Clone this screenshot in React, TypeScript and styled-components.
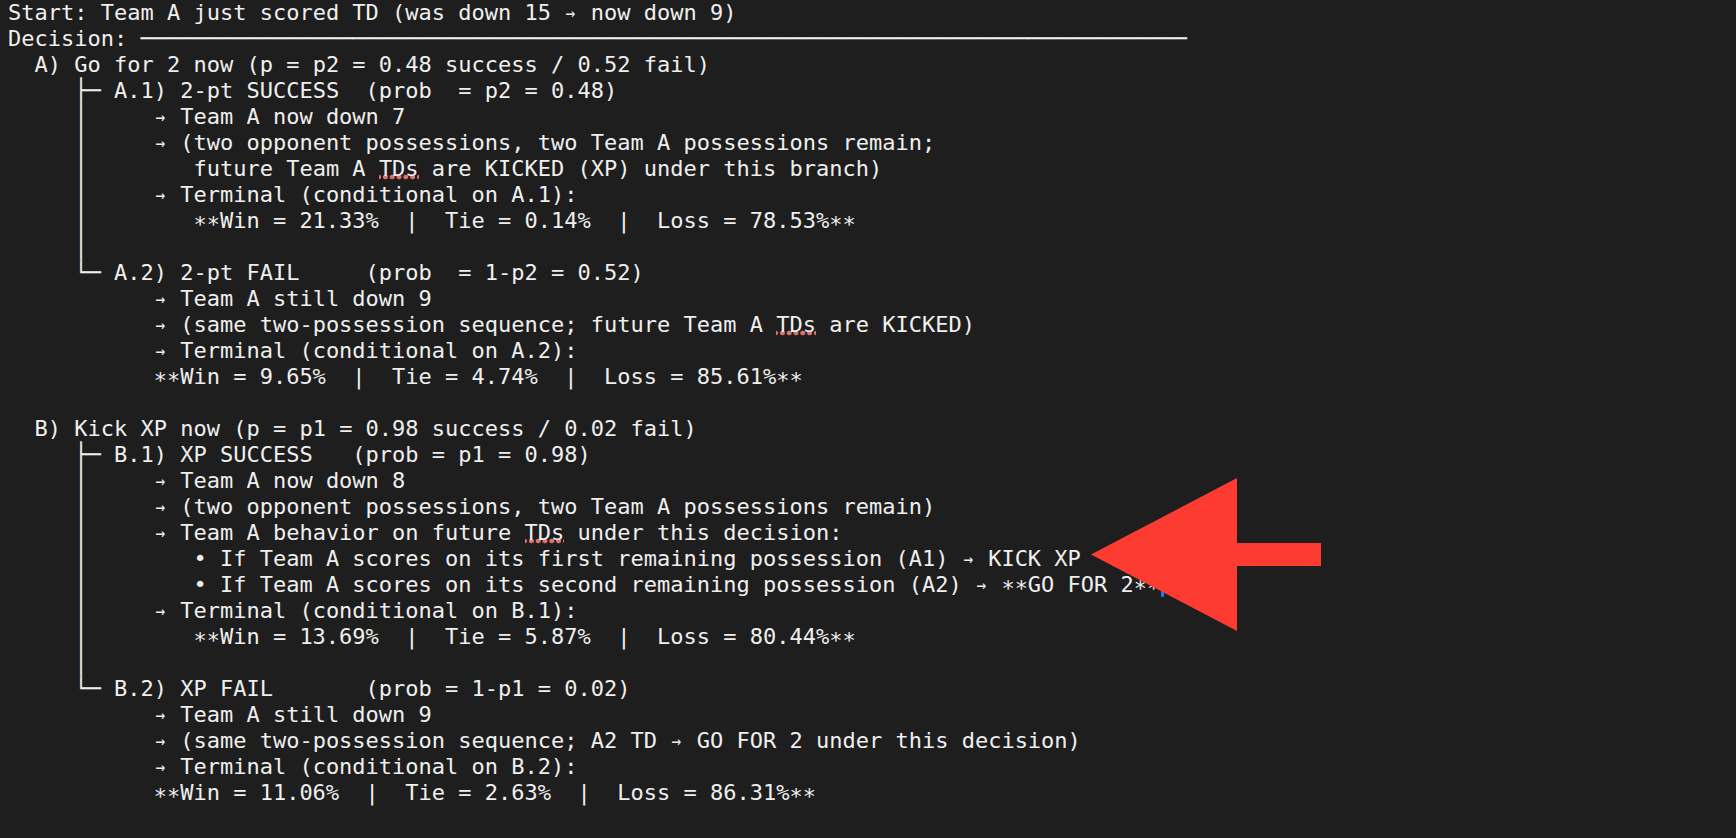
import React from "react";
import styled, { createGlobalStyle } from "styled-components";

const GlobalStyle = createGlobalStyle`
  html, body {
    margin: 0;
    padding: 0;
    background: #1e1e1e;
  }
  #root {
    min-height: 100vh;
    background: #1e1e1e;
  }
`;

const Screen = styled.main`
  position: relative;
  min-height: 838px;
  padding: 0 8px;
  background: #1e1e1e;
  color: #efefef;
  font-family: "DejaVu Sans Mono", "Liberation Mono", monospace;
  font-size: 22px;
  line-height: 26px;
  overflow: hidden;
`;

const Transcript = styled.div`
  display: flex;
  flex-direction: column;
`;

const Line = styled.div`
  height: 26px;
  white-space: pre;
`;

const Arrow = styled.span`
  display: inline-block;
  width: 1ch;
  text-align: center;
  transform: scale(0.72, 0.82);
`;

const Star = styled.span`
  display: inline-block;
  width: 1ch;
  text-align: center;
  vertical-align: -4px;
`;

const Flag = styled.span`
  background-image: radial-gradient(circle at center, #e0736e 0, #e0736e 2.1px, transparent 2.7px);
  background-size: 6.8px 8px;
  background-position: 3px 100%;
  background-repeat: repeat-x;
`;

const Caret = styled.span`
  display: inline-block;
  width: 3px;
  height: 22px;
  margin-left: 1px;
  vertical-align: -5px;
  background: #1d7cf2;
  border-radius: 1px;
`;

const ArrowMark = styled.svg`
  position: absolute;
  left: 1091px;
  top: 478px;
  width: 231px;
  height: 154px;
  pointer-events: none;
`;

type Seg = string | { flag: string } | { caret: true };

const rule = "─".repeat(79);

const lines: Seg[][] = [
  ["Start: Team A just scored TD (was down 15 → now down 9)"],
  ["Decision: " + rule],
  ["  A) Go for 2 now (p = p2 = 0.48 success / 0.52 fail)"],
  ["     ├─ A.1) 2-pt SUCCESS  (prob  = p2 = 0.48)"],
  ["     │     → Team A now down 7"],
  ["     │     → (two opponent possessions, two Team A possessions remain;"],
  ["     │        future Team A ", { flag: "TDs" }, " are KICKED (XP) under this branch)"],
  ["     │     → Terminal (conditional on A.1):"],
  ["     │        **Win = 21.33%  |  Tie = 0.14%  |  Loss = 78.53%**"],
  ["     │"],
  ["     └─ A.2) 2-pt FAIL     (prob  = 1-p2 = 0.52)"],
  ["           → Team A still down 9"],
  ["           → (same two-possession sequence; future Team A ", { flag: "TDs" }, " are KICKED)"],
  ["           → Terminal (conditional on A.2):"],
  ["           **Win = 9.65%  |  Tie = 4.74%  |  Loss = 85.61%**"],
  [""],
  ["  B) Kick XP now (p = p1 = 0.98 success / 0.02 fail)"],
  ["     ├─ B.1) XP SUCCESS   (prob = p1 = 0.98)"],
  ["     │     → Team A now down 8"],
  ["     │     → (two opponent possessions, two Team A possessions remain)"],
  ["     │     → Team A behavior on future ", { flag: "TDs" }, " under this decision:"],
  ["     │        • If Team A scores on its first remaining possession (A1) → KICK XP"],
  ["     │        • If Team A scores on its second remaining possession (A2) → **GO FOR 2**", { caret: true }],
  ["     │     → Terminal (conditional on B.1):"],
  ["     │        **Win = 13.69%  |  Tie = 5.87%  |  Loss = 80.44%**"],
  ["     │"],
  ["     └─ B.2) XP FAIL       (prob = 1-p1 = 0.02)"],
  ["           → Team A still down 9"],
  ["           → (same two-possession sequence; A2 TD → GO FOR 2 under this decision)"],
  ["           → Terminal (conditional on B.2):"],
  ["           **Win = 11.06%  |  Tie = 2.63%  |  Loss = 86.31%**"],
];

function renderText(text: string, key: number) {
  const parts = text.split(/(→|\*)/);
  return (
    <React.Fragment key={key}>
      {parts.map((p, j) => {
        if (p === "→") return <Arrow key={j}>→</Arrow>;
        if (p === "*") return <Star key={j}>*</Star>;
        return <React.Fragment key={j}>{p}</React.Fragment>;
      })}
    </React.Fragment>
  );
}

function renderSeg(seg: Seg, i: number) {
  if (typeof seg === "string") return renderText(seg, i);
  if ("flag" in seg) return <Flag key={i}>{seg.flag}</Flag>;
  return <Caret key={i} />;
}

export default function App() {
  return (
    <>
      <GlobalStyle />
      <Screen>
        <Transcript>
          {lines.map((segs, i) => (
            <Line key={i}>{segs.length && segs[0] !== "" ? segs.map(renderSeg) : " "}</Line>
          ))}
        </Transcript>
        <ArrowMark viewBox="0 0 231 154" aria-hidden="true">
          <polygon
            points="0,76.5 146,0 146,65 230,65 230,88 146,88 146,153"
            fill="#fd3b31"
          />
        </ArrowMark>
      </Screen>
    </>
  );
}
